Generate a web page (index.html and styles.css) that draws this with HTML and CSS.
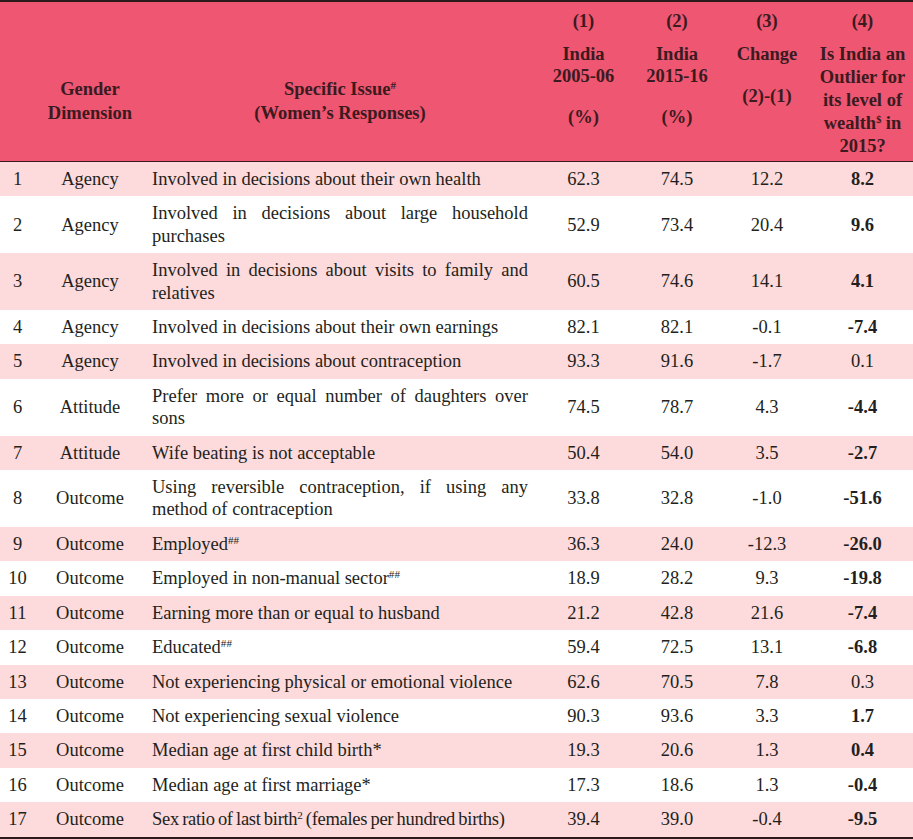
FILE: index.html
```html
<!DOCTYPE html>
<html>
<head>
<meta charset="utf-8">
<link rel="stylesheet" href="styles.css">
</head>
<body>
<table class="tbl">
  <colgroup>
    <col class="c-no"><col class="c-dim"><col class="c-issue"><col class="c-v1"><col class="c-v2"><col class="c-v3"><col class="c-v4">
  </colgroup>
  <thead>
    <tr>
      <th></th>
      <th class="h-low">Gender<br>Dimension</th>
      <th class="h-low">Specific Issue<sup>#</sup><br>(Women’s Responses)</th>
      <th><div class="hn">(1)</div><div class="hm">India<br>2005-06</div><div class="hu">(%)</div></th>
      <th><div class="hn">(2)</div><div class="hm">India<br>2015-16</div><div class="hu">(%)</div></th>
      <th><div class="hn">(3)</div><div class="hm">Change</div><div class="hu2">(2)-(1)</div></th>
      <th><div class="hn">(4)</div><div class="hm4">Is India an<br>Outlier for<br>its level of<br>wealth<sup class="sm">$</sup> in<br>2015?</div></th>
    </tr>
  </thead>
  <tbody>
    <tr class="p"><td>1</td><td>Agency</td><td class="iss">Involved in decisions about their own health</td><td>62.3</td><td>74.5</td><td>12.2</td><td class="b">8.2</td></tr>
    <tr><td>2</td><td>Agency</td><td class="iss">Involved in decisions about large household purchases</td><td>52.9</td><td>73.4</td><td>20.4</td><td class="b">9.6</td></tr>
    <tr class="p"><td>3</td><td>Agency</td><td class="iss">Involved in decisions about visits to family and relatives</td><td>60.5</td><td>74.6</td><td>14.1</td><td class="b">4.1</td></tr>
    <tr><td>4</td><td>Agency</td><td class="iss">Involved in decisions about their own earnings</td><td>82.1</td><td>82.1</td><td>-0.1</td><td class="b">-7.4</td></tr>
    <tr class="p"><td>5</td><td>Agency</td><td class="iss">Involved in decisions about contraception</td><td>93.3</td><td>91.6</td><td>-1.7</td><td>0.1</td></tr>
    <tr><td>6</td><td>Attitude</td><td class="iss">Prefer more or equal number of daughters over sons</td><td>74.5</td><td>78.7</td><td>4.3</td><td class="b">-4.4</td></tr>
    <tr class="p"><td>7</td><td>Attitude</td><td class="iss">Wife beating is not acceptable</td><td>50.4</td><td>54.0</td><td>3.5</td><td class="b">-2.7</td></tr>
    <tr><td>8</td><td>Outcome</td><td class="iss">Using reversible contraception, if using any method of contraception</td><td>33.8</td><td>32.8</td><td>-1.0</td><td class="b">-51.6</td></tr>
    <tr class="p"><td>9</td><td>Outcome</td><td class="iss">Employed<sup>##</sup></td><td>36.3</td><td>24.0</td><td>-12.3</td><td class="b">-26.0</td></tr>
    <tr><td>10</td><td>Outcome</td><td class="iss">Employed in non-manual sector<sup>##</sup></td><td>18.9</td><td>28.2</td><td>9.3</td><td class="b">-19.8</td></tr>
    <tr class="p"><td>11</td><td>Outcome</td><td class="iss">Earning more than or equal to husband</td><td>21.2</td><td>42.8</td><td>21.6</td><td class="b">-7.4</td></tr>
    <tr><td>12</td><td>Outcome</td><td class="iss">Educated<sup>##</sup></td><td>59.4</td><td>72.5</td><td>13.1</td><td class="b">-6.8</td></tr>
    <tr class="p"><td>13</td><td>Outcome</td><td class="iss">Not experiencing physical or emotional violence</td><td>62.6</td><td>70.5</td><td>7.8</td><td>0.3</td></tr>
    <tr><td>14</td><td>Outcome</td><td class="iss">Not experiencing sexual violence</td><td>90.3</td><td>93.6</td><td>3.3</td><td class="b">1.7</td></tr>
    <tr class="p"><td>15</td><td>Outcome</td><td class="iss">Median age at first child birth*</td><td>19.3</td><td>20.6</td><td>1.3</td><td class="b">0.4</td></tr>
    <tr><td>16</td><td>Outcome</td><td class="iss">Median age at first marriage*</td><td>17.3</td><td>18.6</td><td>1.3</td><td class="b">-0.4</td></tr>
    <tr class="p"><td>17</td><td>Outcome</td><td class="iss tight">Sex ratio of last birth<sup>2</sup> (females per hundred births)</td><td>39.4</td><td>39.0</td><td>-0.4</td><td class="b">-9.5</td></tr>
  </tbody>
</table>
</body>
</html>
```
FILE: styles.css
```css
html, body {
  margin: 0;
  padding: 0;
  background: #ffffff;
}
body {
  font-family: "Liberation Serif", "DejaVu Serif", serif;
  color: #231f20;
}
.tbl {
  width: 913px;
  border-collapse: collapse;
  table-layout: fixed;
  font-size: 18.5px;
  border-top: 2px solid #2a1a1c;
  border-bottom: 2px solid #2a1a1c;
}
.c-no { width: 35px; }
.c-dim { width: 110px; }
.c-issue { width: 390px; }
.c-v1 { width: 97px; }
.c-v2 { width: 90px; }
.c-v3 { width: 90px; }
.c-v4 { width: 101px; }

thead tr {
  background: #ee5671;
  border-bottom: 1.5px solid #3a1a1f;
}
th {
  color: #3b1a20;
  font-weight: bold;
  text-align: center;
  vertical-align: top;
  padding: 8px 2px 3px;
  line-height: 23px;
  white-space: nowrap;
}
th.h-low {
  padding-top: 75px;
  line-height: 24px;
}
.hn { line-height: 23px; }
.hm { margin-top: 10px; line-height: 22px; }
.hu { margin-top: 19px; line-height: 22px; }
.hu2 { margin-top: 20px; line-height: 22px; }
.hm4 { margin-top: 10px; line-height: 23px; }
sup {
  font-size: 0.6em;
  line-height: 0;
  vertical-align: 0.55em;
}
sup.sm { font-size: 0.55em; }

td {
  text-align: center;
  vertical-align: middle;
  padding: 6px 3px;
  line-height: 22.4px;
}
td.iss {
  text-align: justify;
  padding: 6px 7px;
}
td.tight {
  white-space: nowrap;
  letter-spacing: -0.3px;
  word-spacing: -1px;
}
td.b { font-weight: bold; }
tr.p { background: #fddadb; }
```
